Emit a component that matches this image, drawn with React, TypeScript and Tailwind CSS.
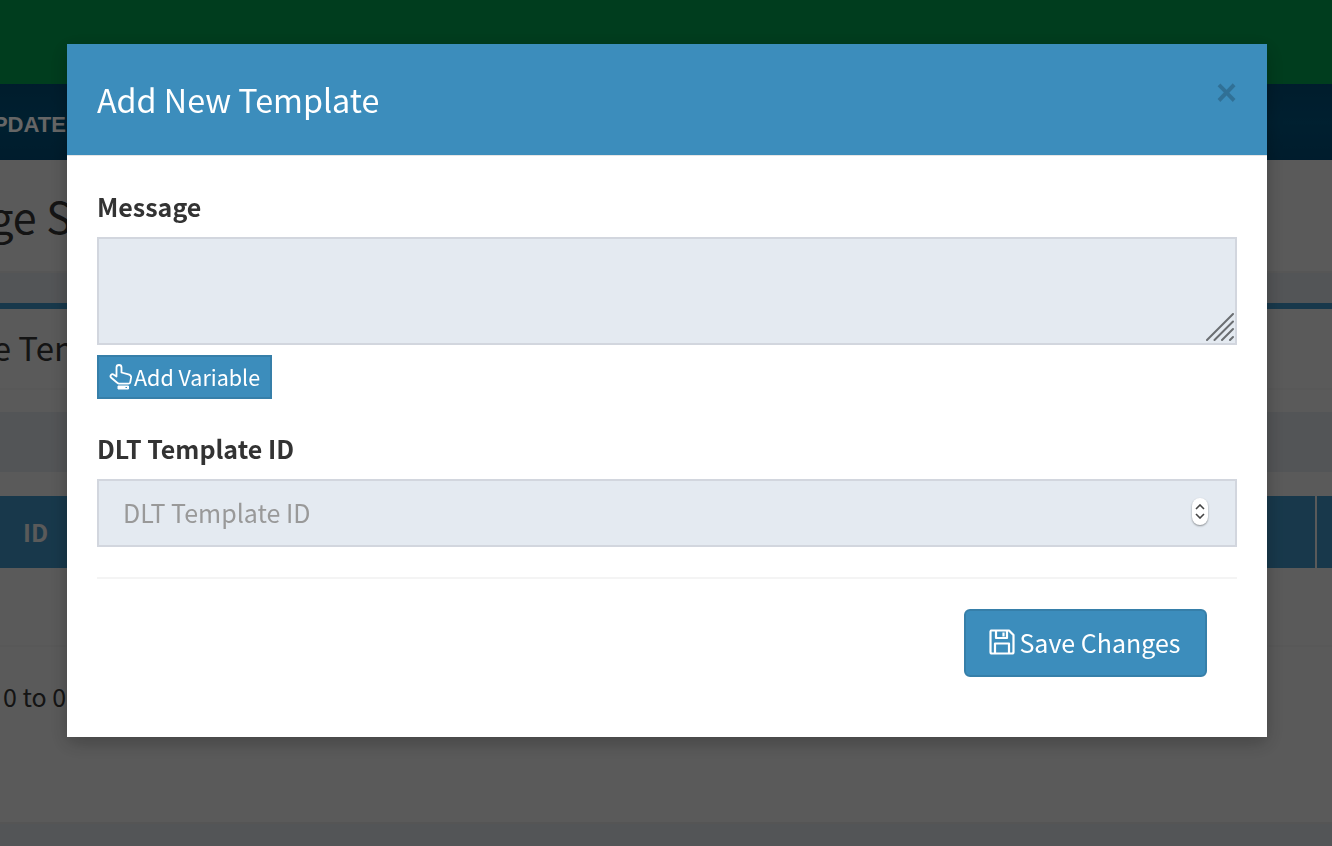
const font = { fontFamily: '"Noto Sans CJK SC", "Noto Sans", sans-serif' };

function HandIcon() {
  return (
    <svg className="ml-[1px] mr-[1px] h-[26px] w-[24px] shrink-0" viewBox="0 0 24 26" fill="none" stroke="white" strokeWidth="1.800" strokeLinejoin="round">
      <path d="M7.500 12.500V3.500a2.500 2.500 0 0 1 5 0V8.500l7 1.800c1.800.5 2.800 1.800 2.600 3.400l-.9 4.600c-.2 1-.8 1.400-1.700 1.400H10c-.8 0-1.300-.4-1.800-1L2 13.500c-1.500-1.800.8-4.300 2.800-2.800Z" />
      <path d="M9 22h10.500v3H9Z" fill="white" strokeWidth="1" />
      <path d="M16.500 23.500h1.500" stroke="#3c8dbc" strokeWidth="1.200" />
    </svg>
  );
}

function SaveIcon() {
  return (
    <svg className="mr-[4px] h-[26px] w-[26px] shrink-0" viewBox="0 0 26 26" fill="none" stroke="white" strokeWidth="2.200" strokeLinejoin="round">
      <path d="M2 1.500h18l4.500 4.500v17a1.500 1.500 0 0 1-1.500 1.500H3A1.500 1.500 0 0 1 1.500 23V3A1.500 1.500 0 0 1 2 1.500Z" />
      <path d="M7 2v7h11V2M14.500 3.500v4" />
      <path d="M6 24V14.500h14V24" />
    </svg>
  );
}

// Page that sits behind the modal; only its left and right edges show
function BackgroundPage() {
  return (
    <div className="flex h-[846px] flex-col overflow-hidden bg-[#e1e1e1] text-[#333]">
      <div className="h-[84px] shrink-0 bg-[#00984b]" />
      <div className="flex h-[76px] shrink-0 items-center bg-gradient-to-b from-[#004870] via-[#005078] to-[#004870]">
        <span className="-ml-[23px] mt-[4px] font-['Liberation_Sans'] text-[22px] font-bold text-white">UPDATE</span>
      </div>
      <div className="flex h-[113px] shrink-0 items-center border-b-2 border-[#d8d8d8]">
        <span className="-ml-[134px] mt-[-1px] whitespace-nowrap text-[43px] leading-none">Message Settings</span>
      </div>
      <div className="h-[30px] shrink-0 bg-[#d0d4d9]" />
      <div className="h-[6px] shrink-0 bg-[#3c8dbc]" />
      <div className="flex h-[81px] shrink-0 items-center border-b-2 border-[#dcdcdc]">
        <span className="-ml-[120px] mt-[-3px] whitespace-nowrap text-[33px] leading-none">Message Templates</span>
      </div>
      <div className="h-[22px] shrink-0" />
      <div className="h-[60px] shrink-0 bg-[#d0d4d9]" />
      <div className="h-[24px] shrink-0" />
      <div className="flex h-[72px] shrink-0 bg-[#3c8dbc]">
        <span className="ml-[23px] self-center text-[24px] font-bold text-[#e1e1e1]">ID</span>
        <span className="ml-auto mr-[15px] w-[2px] bg-[#e1e1e1]" />
      </div>
      <div className="h-[79px] shrink-0 border-b-2 border-[#dcdcdc]" />
      <div className="flex h-[100px] shrink-0 items-center">
        <span className="-ml-[104px] mt-[-1px] whitespace-nowrap text-[25px]">Showing 0 to 0 of 0 entries</span>
      </div>
      <div className="h-[75px] shrink-0" />
      <div className="flex-1 border-t-2 border-[#d4d4d4] bg-[#d0d4d9]" />
    </div>
  );
}

export default function App() {
  return (
    <div style={font} className="relative">
      <BackgroundPage />

      <div className="fixed inset-0 bg-black/60 pl-[67px] pt-[44px]">
        <div className="h-[693px] w-[1200px] bg-white shadow-[0_6px_18px_rgba(0,0,0,0.25)]">
          <div className="flex h-[112px] items-start justify-between border-b border-[#e5e5e5] bg-[#3c8dbc] pl-[30px] pr-[30px]">
            <h4 className="mt-[32px] text-[32.25px] leading-[46px] text-white">Add New Template</h4>
            <button className="mt-[30px] font-['Liberation_Sans'] text-[36px] font-bold leading-[38px] text-black/20">×</button>
          </div>

          <div className="px-[30px] pt-[31px]">
            <label className="block text-[25px] font-bold leading-[38px] text-[#333]">Message</label>
            <div className="relative mt-[12px] h-[108px]">
              <textarea
                readOnly
                className="block h-full w-full resize-none border-2 border-[#d2d6de] bg-[#e4eaf1] outline-none"
              />
              <svg className="absolute bottom-[4px] right-[3px] h-[28px] w-[28px]" viewBox="0 0 28 28" stroke="#6b6e72" strokeWidth="2" strokeLinecap="round">
                <path d="M1 27 27 1M8.500 27 27 8.500M16 27 27 16M24 27l3-3" />
              </svg>
            </div>
            <button className="mt-[10px] flex h-[44px] w-[175px] items-center whitespace-nowrap border-2 border-[#367fa9] bg-[#3c8dbc] pl-[9px] text-[21.500px] leading-none text-white">
              <HandIcon />
              Add Variable
            </button>

            <label className="mt-[30px] block text-[25px] font-bold leading-[38px] text-[#333]">DLT Template ID</label>
            <div className="relative mt-[12px] h-[68px]">
              <input
                readOnly
                placeholder="DLT Template ID"
                className="block h-full w-full border-2 border-[#d2d6de] bg-[#e4eaf1] pb-[2px] pl-[24px] text-[25px] outline-none placeholder:text-[#999]"
              />
              <div className="absolute right-[29px] top-[19px] flex h-[27px] w-[16px] flex-col items-center justify-center gap-[3px] rounded-full bg-white shadow-[0_1px_2px_rgba(0,0,0,0.4)]">
                <svg className="h-[6px] w-[10px]" viewBox="0 0 10 6" fill="none" stroke="#444" strokeWidth="1.600"><path d="M1 5 5 1l4 4" /></svg>
                <svg className="h-[6px] w-[10px]" viewBox="0 0 10 6" fill="none" stroke="#444" strokeWidth="1.600"><path d="M1 1l4 4 4-4" /></svg>
              </div>
            </div>

            <hr className="mt-[30px] border-t-2 border-[#f4f4f4]" />

            <div className="mt-[30px] flex justify-end pr-[30px]">
              <button className="flex h-[68px] w-[243px] items-center justify-center whitespace-nowrap rounded-[6px] border-2 border-[#367fa9] bg-[#3c8dbc] pb-[2px] pr-[1px] text-[25px] leading-none text-white">
                <SaveIcon />
                Save Changes
              </button>
            </div>
          </div>
        </div>
      </div>
    </div>
  );
}
